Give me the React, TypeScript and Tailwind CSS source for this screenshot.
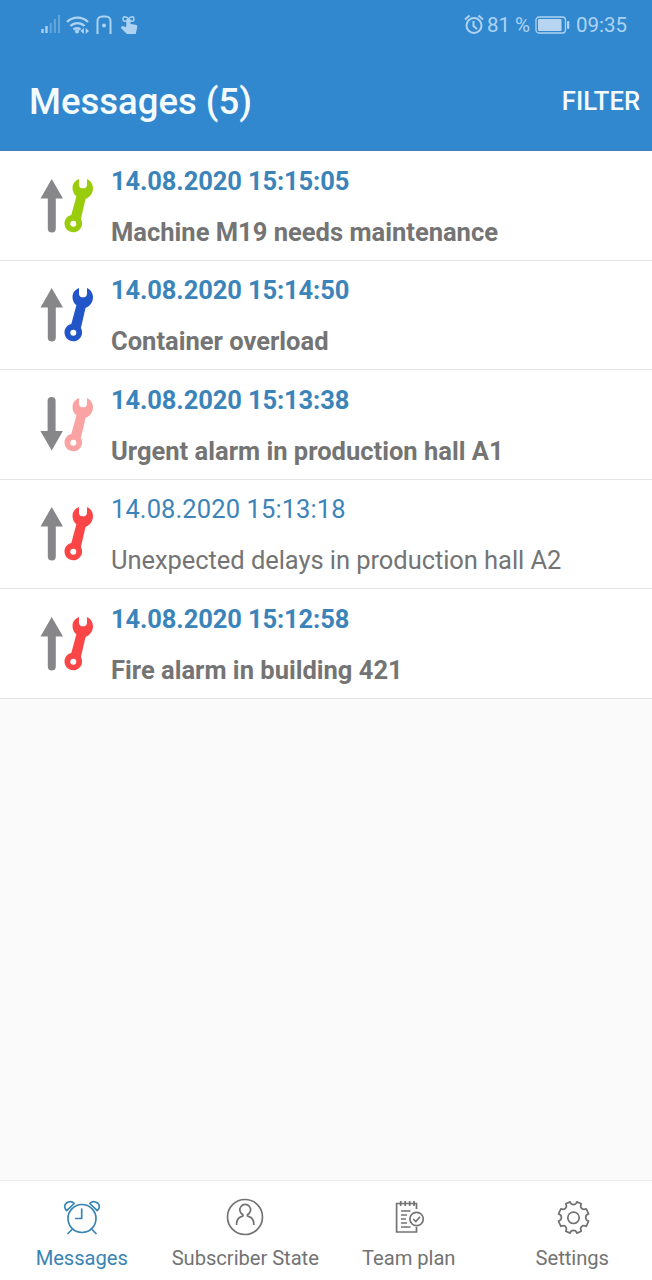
import React from "react";

type Message = { time: string; text: string; color: string; down?: boolean; read?: boolean };

const messages: Message[] = [
  { time: "14.08.2020 15:15:05", text: "Machine M19 needs maintenance", color: "#99cc0c" },
  { time: "14.08.2020 15:14:50", text: "Container overload", color: "#2255c8" },
  { time: "14.08.2020 15:13:38", text: "Urgent alarm in production hall A1", color: "#fba3a3", down: true },
  { time: "14.08.2020 15:13:18", text: "Unexpected delays in production hall A2", color: "#fa4646", read: true },
  { time: "14.08.2020 15:12:58", text: "Fire alarm in building 421", color: "#fa4646" },
];

function StateIcon({ color, down }: { color: string; down?: boolean }) {
  return (
    <svg width="81" height="80" viewBox="0 0 81 80" className="shrink-0">
      <g transform={down ? "rotate(180 21.7 40.300)" : undefined}>
        <path d="M21.7 14 33 33.500h-7.200V63.500a4 4 0 0 1-8 0V33.500h-7.300Z" fill="#878789" />
      </g>
      <path
        fill={color}
        fillRule="evenodd"
        d="M49 13.900c-4 1.600-6.500 5-6.500 9 0 3.500 1.500 6.400 3.900 8.400L41.300 50c-4 .9-6.800 4.300-6.800 8.500a8.800 8.800 0 1 0 16.400-4.500L55.600 33.800c4.300-1.400 7.400-5.700 7.400-10.600 0-4.200-2.400-7.700-6-9.300v6c0 2-1.600 3.400-4 3.400s-4-1.400-4-3.400ZM43.300 55.800a3 3 0 1 1 0 6 3 3 0 0 1 0-6Z"
      />
    </svg>
  );
}

function Row({ m }: { m: Message }) {
  return (
    <li className="flex h-[109.500px] items-start border-b border-[#e4e4e4] bg-white pl-[30px] pt-[13.500px]">
      <StateIcon color={m.color} down={m.down} />
      <div className={"flex flex-col whitespace-nowrap text-[25.500px] leading-[32px] " + (m.read ? "font-normal" : "font-bold")}>
        <span className={"text-[#3b84ba] " + (m.read ? "tracking-[0.100px]" : "tracking-[-0.110px]")}>{m.time}</span>
        <span className={"mt-[19px] text-[#747474] " + (m.read ? "tracking-[-0.060px]" : "tracking-[0.010px]")}>{m.text}</span>
      </div>
    </li>
  );
}

function AlarmIcon() {
  return (
    <svg width="40" height="40" viewBox="0 0 40 40" fill="none" stroke="currentColor" strokeWidth="1.700" strokeLinecap="round" strokeLinejoin="round">
      <circle cx="20" cy="21.500" r="14" />
      <path d="M19.700 12V21.500h-6M10 32.500l-4 4M30 32.500l4 4" />
      <path d="M4.700 13.700C2 11 2 8 4.500 6S10.500 4 12.200 6.500Z M35.300 13.700c2.700-2.700 2.700-5.700.2-7.700s-6-2-7.700.5Z" />
    </svg>
  );
}

function PersonIcon() {
  return (
    <svg width="40" height="40" viewBox="0 0 40 40" fill="none" stroke="currentColor" strokeWidth="1.700">
      <circle cx="20" cy="20" r="17.500" />
      <path d="M11.600 28v-1.200c0-4 2-6.600 5.900-7.700l.5-.3v-1.100a5.400 5.400 0 1 1 4.400 0v1.100l.5.300c3.900 1.100 5.900 3.700 5.900 7.700V28" />
    </svg>
  );
}

function PlanIcon() {
  return (
    <svg width="40" height="40" viewBox="0 0 40 40" fill="none" stroke="currentColor" strokeWidth="1.700">
      <path d="M27.500 12V6.500H7.600V35h19.900v-5" />
      <path d="M11.700 4v5M16.200 4v5M20.700 4v5M25 4v5M12 14h9.500M12 18h6M12 22h5M12 26h6M12 30h9.500" />
      <circle cx="27.600" cy="22" r="6.700" />
      <path d="m24.300 22 2.500 2.500 4.300-4.800" />
    </svg>
  );
}

function GearIcon() {
  return (
    <svg width="40" height="40" viewBox="0 0 40 40" fill="none" stroke="currentColor" strokeWidth="1.700" strokeLinejoin="round">
      <g transform="translate(1.300 .800)">
        <circle cx="20.200" cy="20" r="5.700" />
        <path d="M12.500 6 16.800 4.100c1 3.700 5.800 3.700 6.800 0L28 6c-2 3.600 1.100 6.700 4.900 5l2.400 5.100c-3.900 1.100-3.900 6.100 0 7.200l-2.400 5.200c-3.800-1.800-6.900 1.300-4.900 4.900l-4.400 1.900c-1-3.700-5.800-3.700-6.800 0l-4.300-1.900c2-3.600-1.200-6.700-4.900-4.900l-2.400-5.200c3.900-1.100 3.900-6.100 0-7.200L7.600 11c3.700 1.700 6.900-1.400 4.900-5Z" />
      </g>
    </svg>
  );
}

function StatusBar() {
  return (
    <div className="flex h-[50px] items-center justify-between pl-[40px] pr-[25px] text-[#aed3f2]">
      <svg width="100" height="30" viewBox="0 0 100 30" fill="none" stroke="currentColor" strokeWidth="2">
        <path d="M2.500 23v-4M6.500 23v-7" strokeWidth="2.300" />
        <path d="M10.700 23V13M14.900 23V9M19 23V5" opacity=".4" />
        <path d="M27 12a15 15 0 0 1 21 0M30.500 16a10 10 0 0 1 14 0M33.500 19.500a6 6 0 0 1 7 0" strokeWidth="2.300" />
        <circle cx="37" cy="21.500" r="2" fill="currentColor" stroke="none" />
        <path d="m40.500 21 3.300-3v6ZM49 21l-3.300-3v6Z" fill="currentColor" stroke="none" />
        <path d="M57.500 24V11A4.500 4.500 0 0 1 62 6.500h4A4.500 4.500 0 0 1 70.500 11v13" />
        <circle cx="64" cy="15.500" r="2" fill="currentColor" stroke="none" />
        <path d="M88.500 9c-2-3-5.500-3-5.500 0s3.500 3 5.500 0Zm0 0c2-3 5.500-3 5.500 0s-3.500 3-5.500 0Z" strokeWidth="1.400" />
        <path d="M86.300 10c0-2 4.200-2 4.200 0v4l5 .8c1.500.3 2 1 1.700 2.500l-1.500 6.700h-8.800l-6.200-6.300 1.500-1.600 4.100 1Z" fill="currentColor" stroke="none" />
      </svg>
      <div className="flex items-center text-[20.500px] leading-[24px]">
        <svg width="21" height="22" viewBox="0 0 21 22" fill="none" stroke="currentColor" strokeWidth="2" className="mr-[2px]">
          <circle cx="10" cy="11.500" r="7.500" />
          <path d="M9.500 7v5l3.500 3M1 5.500l4.500-4M19 5.500l-4.500-4" />
        </svg>
        <span className="w-[43px] whitespace-nowrap">81 %</span>
        <svg width="36" height="18" viewBox="0 0 36 18" fill="none" className="ml-[5px] mr-[5px]">
          <rect x="1" y="1" width="29.500" height="16" rx="3" stroke="currentColor" strokeWidth="1.300" />
          <rect x="3" y="3" width="23.500" height="12" rx="1" fill="#b7d5f1" />
          <rect x="32" y="5" width="2.300" height="8" rx="1" fill="currentColor" />
        </svg>
        <span>09:35</span>
      </div>
    </div>
  );
}

const tabs = [
  { label: "Messages", icon: <AlarmIcon />, style: "text-[#3884b5]" },
  { label: "Subscriber State", icon: <PersonIcon />, style: "text-[#737373]" },
  { label: "Team plan", icon: <PlanIcon />, style: "text-[#737373]" },
  { label: "Settings", icon: <GearIcon />, style: "text-[#737373]" },
];

export default function App() {
  return (
    <div className="flex h-[1280px] w-[652px] flex-col overflow-hidden bg-[#fafafa] font-['Roboto',sans-serif]">
      <header className="h-[151px] shrink-0 border-b border-[#4382b5] bg-[#3188cf]">
        <StatusBar />
        <div className="flex h-[102px] items-center justify-between pl-[29px] pr-[12px] pt-[2px] font-medium text-[#f4fbff]">
          <h1 className="text-[36.500px] leading-[44px]">Messages (5)</h1>
          <button className="pb-[2px] text-[25.600px] leading-[32px]">FILTER</button>
        </div>
      </header>
      <ul>
        {messages.map((m) => (
          <Row key={m.time} m={m} />
        ))}
      </ul>
      <nav className="mt-auto grid h-[100px] w-[654px] shrink-0 grid-cols-4 border-t border-[#eeeeee] bg-white">
        {tabs.map((t) => (
          <button key={t.label} className={"flex flex-col items-center whitespace-nowrap pt-[16px] text-[20.200px] leading-[26px] " + t.style}>
            {t.icon}
            <span className="mt-[7.500px] tracking-[-0.050px]">{t.label}</span>
          </button>
        ))}
      </nav>
    </div>
  );
}
